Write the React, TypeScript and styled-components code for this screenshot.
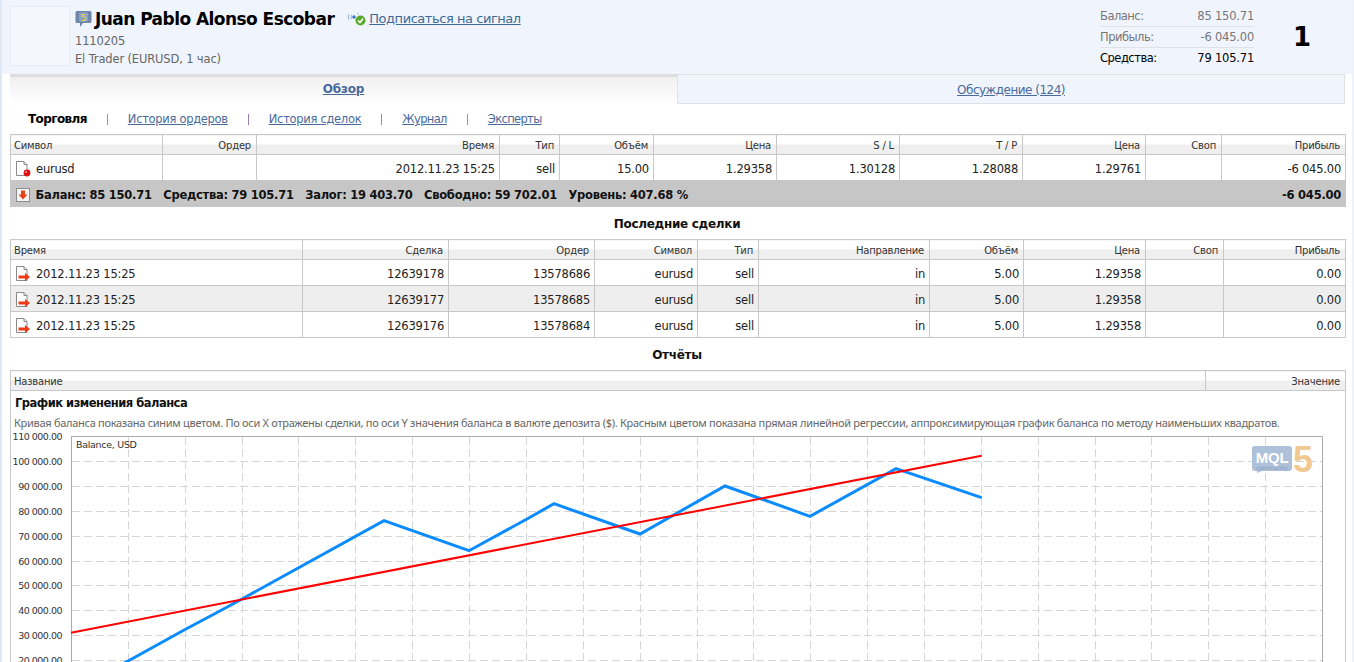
import React from "react";
import styled, { createGlobalStyle } from "styled-components";

const FONT = `"DejaVu Sans", Verdana, sans-serif`;
const Global = createGlobalStyle`
  html, body { margin: 0; padding: 0; height: 100%; overflow: hidden; background: #fff; }
  body { font-family: ${FONT}; font-size: 11px; color: #222; }
`;

const Page = styled.div`
  height: 662px; overflow: hidden; box-sizing: border-box;
  background: #fff; border-left: 2px solid #dfe8f5; border-right: 2px solid #eef3fb;
`;
const Head = styled.header`
  height: 74px; background: #f0f5fd; display: flex; padding: 6px 0 0 8px; box-sizing: border-box;
`;
const Avatar = styled.div`
  width: 60px; height: 60px; box-sizing: border-box; border: 1px solid #e6ecf4; background: #f4f8fe; margin-right: 5px;
`;
const Identity = styled.div`flex: 1; display: flex; flex-direction: column; padding-top: 2px;`;
const NameRow = styled.div`display: flex; align-items: center; height: 21px;`;
const Name = styled.span`font-size: 17px; font-weight: bold; color: #000; margin-left: 2px; letter-spacing: -0.55px; white-space: nowrap;`;
const SignalLink = styled.a`
  font-size: 13px; color: #3f6a96; text-decoration: underline; margin-left: 2px; letter-spacing: -0.45px;
`;
const SignalIcon = styled.svg`margin-left: 12px;`;
const SubLine = styled.div`font-size: 11.5px; color: #666; line-height: 18px; margin-top: ${p => p.$top || 0}px; letter-spacing: -0.15px;`;
const Stats = styled.div`width: 154px; margin-right: 23px;`;
const StatRow = styled.div`
  display: flex; justify-content: space-between; height: 21px; line-height: 20px; box-sizing: border-box;
  font-size: 11.5px; letter-spacing: -0.2px; color: ${p => (p.$strong ? "#000" : "#777")};
  border-bottom: ${p => (p.$strong ? "none" : "1px solid #dfe3e8")};
`;
const StatLabel = styled.span`letter-spacing: -0.5px;`;
const Rank = styled.div`width: 63px; font-size: 26px; font-weight: bold; color: #000; padding-top: 16px; margin-right: 12px; text-indent: 16px;`;

const Tabs = styled.div`display: flex; height: 30px; margin: 0 7px 0 8px;`;
const Tab = styled.a`
  width: ${p => p.$w}px; box-sizing: border-box; text-align: center; font-size: 12px; line-height: 25px; padding-top: 3px;
  text-decoration: underline; color: #4a6a9c; letter-spacing: -0.2px;
  ${p => p.$active
    ? `border-top: 3px solid #ddd; background: linear-gradient(#f0f0f0, #fff); font-weight: bold; padding-top: 0;`
    : `border: 1px solid #dfe3e6; background: #f0f5fd; padding-top: 3px; letter-spacing: -0.52px;`}
`;

const SubNav = styled.nav`display: flex; align-items: center; height: 30px; padding-left: 26px; font-size: 11.5px; letter-spacing: -0.3px;`;
const Current = styled.b`color: #000; font-size: 12px; letter-spacing: -0.6px;`;
const NavLink = styled.a`color: #4a6a9c; text-decoration: underline; letter-spacing: ${p => (p.$tight ? "-0.65px" : "inherit")};`;
const Sep = styled.i`width: 1px; height: 11px; margin: 0 20px; background: ${p => p.$c};`;

const Table = styled.table`
  width: 1335px; margin-left: 8px; border-collapse: collapse; table-layout: fixed; font-size: 11.5px; color: #222;
  letter-spacing: -0.2px;
`;
const Col = styled.col`width: ${p => p.$w}px;`;
const Th = styled.th`
  height: 17px; padding: 2px 5px 0 3px; font-weight: normal; font-size: 10px; text-align: ${p => p.$left ? "left" : "right"};
  border: 1px solid #c8c8c8; background: linear-gradient(#fff 0, #fff 45%, #efefef 45%, #efefef 100%); line-height: 17px; color: #333; letter-spacing: -0.2px;
`;
const Td = styled.td`
  height: 23px; padding: 2px 4px 0; text-align: ${p => p.$left ? "left" : "right"}; border: 1px solid #c8c8c8; white-space: nowrap;
  background: ${p => (p.$alt ? "#eeeeee" : "#fff")};
`;
const CellIcon = styled.span`display: flex; align-items: center; gap: 5px;`;
const SumCell = styled.td`height: 23px; background: #c6c6c6; padding: 2px 4px 0; border: 1px solid #c6c6c6; font-weight: bold; font-size: 11.5px; color: #111; letter-spacing: -0.25px;`;
const SumInner = styled.div`display: flex; align-items: center; justify-content: space-between;`;
const SumLeft = styled.div`display: flex; align-items: center; gap: 11.500px;`;
const SumIcon = styled.span`display: inline-flex; margin-left: 1px; margin-right: -6px;`;

const Section = styled.h3`
  margin: 0; height: ${p => p.$h}px; line-height: ${p => p.$h + 3}px; text-align: center; font-size: 12px; font-weight: bold; color: #111; letter-spacing: -0.3px; box-sizing: border-box;
`;
const ReportCell = styled.td`border: 1px solid #c8c8c8; padding: 1px 0 0; vertical-align: top;`;
const ReportTitle = styled.div`font-size: 11.5px; font-weight: bold; color: #111; padding: 2px 0 0 4px; height: 22px; box-sizing: border-box; line-height: 18px; letter-spacing: -0.5px;`;
const ReportNote = styled.div`font-family: "Noto Sans", sans-serif; font-size: 11px; letter-spacing: -0.285px; color: #666; padding-left: 3px; line-height: 18px; white-space: nowrap;`;
const ChartSvg = styled.svg`display: block; width: 1333px; height: 240px; margin-top: -1px;`;

const DocIcon = ({ kind }: { kind: "dot" | "arrow" }) => (
  <svg width="16" height="16" viewBox="0 0 16 16">
    <path d="M1.500 .5H9L12 3.500V14.500H1.500Z" fill="#fff" stroke="#8a8a8a" />
    <path d="M9 .5V3.500H12" fill="#e8e8e8" stroke="#8a8a8a" />
    {kind === "dot" ? (
      <>
        <circle cx="12" cy="12" r="3.400" fill="#e01010" />
        <circle cx="11" cy="11" r="1" fill="#ff9a9a" />
      </>
    ) : (
      <path d="M3.500 9.500H10V7L15 11L10 15V12.500H3.500Z" fill="#ee3a16" />
    )}
  </svg>
);

const DownIcon = () => (
  <svg width="14" height="14" viewBox="0 0 14 14">
    <rect x=".5" y=".5" width="13" height="13" fill="#f4f4f4" stroke="#8d8d8d" />
    <path d="M5 2.500H9V6.500H11.500L7 11.500L2.500 6.500H5Z" fill="#e8431c" />
  </svg>
);

const Badge = () => (
  <svg width="18" height="18" viewBox="0 0 18 18">
    <path d="M2 1H15Q16.500 1 16.500 2.500V11.500Q16.500 13 15 13H8L5 17V13H2Q.5 13 .5 11.500V2.500Q.5 1 2 1Z" fill="#6d86aa" />
    <rect x="4" y="2.500" width="9" height="9" rx="1" fill="#8ea3c0" />
    <text x="8.500" y="10.500" textAnchor="middle" fontSize="9.500" fontFamily="DejaVu Sans" fill="#f2d84a">5</text>
  </svg>
);

const Signal = () => (
  <SignalIcon width="21" height="18" viewBox="0 0 21 18">
    <path d="M3 4Q1.500 7 3 10M5.500 5Q4.500 7 5.500 9" fill="none" stroke="#9db4d3" strokeWidth="1" />
    <circle cx="8" cy="7" r="1.800" fill="#3d78c4" />
    <path d="M11 3Q12 3.500 12.500 4.500" fill="none" stroke="#9db4d3" />
    <circle cx="14.500" cy="10.500" r="5" fill="#58a82a" />
    <path d="M12 10.500L14 12.500L17 8.500" fill="none" stroke="#fff" strokeWidth="1.600" />
  </SignalIcon>
);

const trades = [
  ["12639178", "13578686"],
  ["12639177", "13578685"],
  ["12639176", "13578684"],
];
const vGrid = [128, 185, 242, 298, 355, 412, 469, 526, 583, 640, 697, 753, 810, 867, 924, 981, 1038, 1095, 1151, 1208, 1265];
const hGrid = [461, 486, 511, 536, 561, 585, 610, 635, 660];
const yLabels = ["110 000.00", "100 000.00", "90 000.00", "80 000.00", "70 000.00", "60 000.00", "50 000.00", "40 000.00", "30 000.00", "20 000.00"];
const yPos = [436, 461, 486, 511, 536, 561, 585, 610, 635, 660];
const balance = "113,669 128,661 186,629 218,612 242,599 384,520.700 469,550.700 527,519 554,503.700 640,534 725,486 810,516.300 896,468.700 981.600,497.700";

const Chart = () => (
  <ChartSvg viewBox="11 431 1333 240">
    {hGrid.map(y => <line key={y} x1="72" x2="1322" y1={y + 0.5} y2={y + 0.5} stroke="#d6d6d6" strokeDasharray="8 4" />)}
    {vGrid.map(x => <line key={x} x1={x + 0.5} x2={x + 0.5} y1="437" y2="671" stroke="#d6d6d6" strokeDasharray="8 4" />)}
    <path d="M71.500 671V436.500H1322.500V671" fill="none" stroke="#a9a9a9" />
    {yLabels.map((t, i) => (
      <text key={t} x="62" y={yPos[i] + 4} textAnchor="end" fontSize="9.500" letterSpacing="-0.5" fontFamily="DejaVu Sans" fill="#333">{t}</text>
    ))}
    <text x="76" y="448" fontSize="9.500" letterSpacing="-0.3" fontFamily="DejaVu Sans" fill="#333">Balance, USD</text>
    <polyline points={balance} fill="none" stroke="#0a8cff" strokeWidth="3" />
    <line x1="71" y1="632.700" x2="981.600" y2="455.700" stroke="#ff0000" strokeWidth="2" />
    <path d="M1255 446H1289Q1292 446 1292 449V468Q1292 471 1289 471H1262L1257 473V471H1255Q1252 471 1252 468V449Q1252 446 1255 446Z" fill="#aec0da" />
    <text x="1272" y="463" textAnchor="middle" fontSize="15" fontWeight="bold" fontFamily="Liberation Sans" fill="#fff">MQL</text>
    <text x="1272" y="470" textAnchor="middle" fontSize="6" fontFamily="DejaVu Sans" fill="#8a9fbc">community</text>
    <text x="1303" y="472" textAnchor="middle" fontSize="36" fontWeight="bold" fontFamily="Liberation Sans" fill="#efc98f">5</text>
  </ChartSvg>
);

export default function App() {
  return (
    <>
      <Global />
      <Page>
        <Head>
          <Avatar />
          <Identity>
            <NameRow>
              <Badge />
              <Name>Juan Pablo Alonso Escobar</Name>
              <Signal />
              <SignalLink>Подписаться на сигнал</SignalLink>
            </NameRow>
            <SubLine $top={3}>1110205</SubLine>
            <SubLine>El Trader (EURUSD, 1 час)</SubLine>
          </Identity>
          <Stats>
            <StatRow><StatLabel>Баланс:</StatLabel><span>85 150.71</span></StatRow>
            <StatRow><StatLabel>Прибыль:</StatLabel><span>-6 045.00</span></StatRow>
            <StatRow $strong><StatLabel>Средства:</StatLabel><span>79 105.71</span></StatRow>
          </Stats>
          <Rank>1</Rank>
        </Head>
        <Tabs>
          <Tab $active $w={667}>Обзор</Tab>
          <Tab $w={668}>Обсуждение (124)</Tab>
        </Tabs>
        <SubNav>
          <Current>Торговля</Current>
          <Sep $c="#7a9cc0" />
          <NavLink>История ордеров</NavLink>
          <Sep $c="#a07ab0" />
          <NavLink>История сделок</NavLink>
          <Sep $c="#7aa090" />
          <NavLink $tight>Журнал</NavLink>
          <Sep $c="#7a9cc0" />
          <NavLink $tight>Эксперты</NavLink>
        </SubNav>

        <Table>
          <colgroup>
            {[152, 94, 243, 60, 94, 123, 123, 123, 123, 76, 124].map((w, i) => <Col key={i} $w={w} />)}
          </colgroup>
          <thead>
            <tr>
              <Th $left>Символ</Th><Th>Ордер</Th><Th>Время</Th><Th>Тип</Th><Th>Объём</Th><Th>Цена</Th>
              <Th>S / L</Th><Th>T / P</Th><Th>Цена</Th><Th>Своп</Th><Th>Прибыль</Th>
            </tr>
          </thead>
          <tbody>
            <tr>
              <Td $left><CellIcon><DocIcon kind="dot" />eurusd</CellIcon></Td>
              <Td /><Td>2012.11.23 15:25</Td><Td>sell</Td><Td>15.00</Td><Td>1.29358</Td>
              <Td>1.30128</Td><Td>1.28088</Td><Td>1.29761</Td><Td /><Td>-6 045.00</Td>
            </tr>
            <tr>
              <SumCell colSpan={11}>
                <SumInner>
                  <SumLeft>
                    <SumIcon><DownIcon /></SumIcon>
                    <span>Баланс: 85 150.71</span>
                    <span>Средства: 79 105.71</span>
                    <span>Залог: 19 403.70</span>
                    <span>Свободно: 59 702.01</span>
                    <span>Уровень: 407.68 %</span>
                  </SumLeft>
                  <span>-6 045.00</span>
                </SumInner>
              </SumCell>
            </tr>
          </tbody>
        </Table>

        <Section $h={32}>Последние сделки</Section>

        <Table>
          <colgroup>
            {[292, 146, 146, 103, 61, 171, 94, 122, 78, 122].map((w, i) => <Col key={i} $w={w} />)}
          </colgroup>
          <thead>
            <tr>
              <Th $left>Время</Th><Th>Сделка</Th><Th>Ордер</Th><Th>Символ</Th><Th>Тип</Th><Th>Направление</Th>
              <Th>Объём</Th><Th>Цена</Th><Th>Своп</Th><Th>Прибыль</Th>
            </tr>
          </thead>
          <tbody>
            {trades.map(([deal, order], i) => (
              <tr key={deal}>
                <Td $left $alt={i === 1}><CellIcon><DocIcon kind="arrow" />2012.11.23 15:25</CellIcon></Td>
                <Td $alt={i === 1}>{deal}</Td>
                <Td $alt={i === 1}>{order}</Td>
                <Td $alt={i === 1}>eurusd</Td>
                <Td $alt={i === 1}>sell</Td>
                <Td $alt={i === 1}>in</Td>
                <Td $alt={i === 1}>5.00</Td>
                <Td $alt={i === 1}>1.29358</Td>
                <Td $alt={i === 1} />
                <Td $alt={i === 1}>0.00</Td>
              </tr>
            ))}
          </tbody>
        </Table>

        <Section $h={32}>Отчёты</Section>

        <Table>
          <colgroup>
            <Col $w={1195} /><Col $w={140} />
          </colgroup>
          <thead>
            <tr><Th $left>Название</Th><Th>Значение</Th></tr>
          </thead>
          <tbody>
            <tr>
              <ReportCell colSpan={2}>
                <ReportTitle>График изменения баланса</ReportTitle>
                <ReportNote>Кривая баланса показана синим цветом. По оси X отражены сделки, по оси Y значения баланса в валюте депозита ($). Красным цветом показана прямая линейной регрессии, аппроксимирующая график баланса по методу наименьших квадратов.</ReportNote>
                <Chart />
              </ReportCell>
            </tr>
          </tbody>
        </Table>
      </Page>
    </>
  );
}
